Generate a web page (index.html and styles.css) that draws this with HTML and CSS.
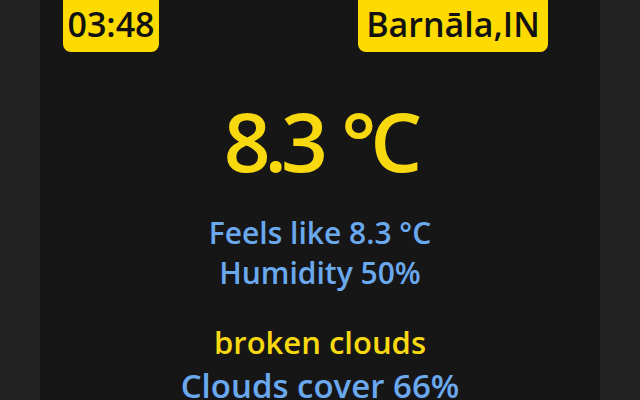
FILE: index.html
```html
<!DOCTYPE html>
<html>
<head>
<meta charset="utf-8">
<link rel="stylesheet" href="styles.css">
</head>
<body>
<div class="panel">
  <div class="top">
    <div class="badge time">03:48</div>
    <div class="badge loc">Barnāla,IN</div>
  </div>
  <div class="temp">8.3 °C</div>
  <div class="info">
    <div class="blue">Feels like 8.3 °C</div>
    <div class="blue">Humidity 50%</div>
  </div>
  <div class="desc">broken clouds</div>
  <div class="cover">Clouds cover 66%</div>
</div>
</body>
</html>
```
FILE: styles.css
```css
html, body {
  margin: 0;
  padding: 0;
  background: #222222;
  height: 100%;
  overflow: hidden;
}
body {
  font-family: "Open Sans", "Noto Sans", sans-serif;
  font-weight: 600;
}
.panel {
  width: 560px;
  height: 400px;
  margin: 0 auto;
  background: #171617;
  display: flex;
  flex-direction: column;
  align-items: center;
}
.top {
  width: 100%;
  display: flex;
  justify-content: space-between;
  padding: 0 52px 0 23px;
  box-sizing: border-box;
}
.badge {
  background: #fedb00;
  color: #111;
  font-size: 34px;
  line-height: 48px;
  height: 52px;
  text-align: center;
  border-radius: 0 0 8px 8px;
  white-space: nowrap;
}
.time {
  width: 96px;
}
.loc {
  width: 190px;
}
.temp {
  color: #f8d90f;
  font-size: 82px;
  line-height: 90px;
  margin-top: 43px;
  letter-spacing: -6px;
  word-spacing: 4px;
  white-space: nowrap;
}
.info {
  margin-top: 28px;
  text-align: center;
}
.blue {
  color: #6aa9ee;
  font-size: 30px;
  line-height: 40px;
  white-space: nowrap;
}
.desc {
  color: #f8d90f;
  font-size: 31px;
  line-height: 40px;
  margin-top: 29px;
  white-space: nowrap;
}
.cover {
  color: #6aa9ee;
  font-size: 33px;
  line-height: 40px;
  margin-top: 4px;
  white-space: nowrap;
}
```
